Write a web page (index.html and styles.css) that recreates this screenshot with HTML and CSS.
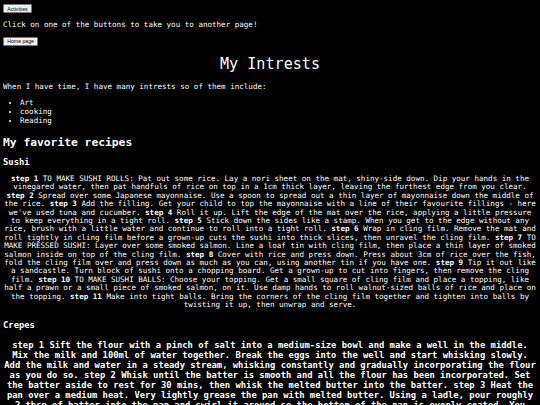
FILE: index.html
```html
<!DOCTYPE html>
<html>
<head>
<meta charset="utf-8">
<title>My Intrests</title>
<link rel="stylesheet" href="styles.css">
</head>
<body>
<div class="nav"><button class="btn">Activities</button></div>
<p class="intro">Click on one of the buttons to take you to another page!</p>
<div class="nav"><button class="btn">Home page</button></div>
<h1 class="title">My Intrests</h1>
<p class="text">When I have time, I have many intrests so of them include:</p>
<ul class="list">
<li>Art</li>
<li>cooking</li>
<li>Reading</li>
</ul>
<h2 class="section">My favorite recipes</h2>
<h3 class="recipe">Sushi</h3>
<p class="steps"><b>step 1</b> TO MAKE SUSHI ROLLS: Pat out some rice. Lay a nori sheet on the mat, shiny-side down. Dip your hands in the vinegared water, then pat handfuls of rice on top in a 1cm thick layer, leaving the furthest edge from you clear. <b>step 2</b> Spread over some Japanese mayonnaise. Use a spoon to spread out a thin layer of mayonnaise down the middle of the rice. <b>step 3</b> Add the filling. Get your child to top the mayonnaise with a line of their favourite fillings - here we've used tuna and cucumber. <b>step 4</b> Roll it up. Lift the edge of the mat over the rice, applying a little pressure to keep everything in a tight roll. <b>step 5</b> Stick down the sides like a stamp. When you get to the edge without any rice, brush with a little water and continue to roll into a tight roll. <b>step 6</b> Wrap in cling film. Remove the mat and roll tightly in cling film before a grown-up cuts the sushi into thick slices, then unravel the cling film. <b>step 7</b> TO MAKE PRESSED SUSHI: Layer over some smoked salmon. Line a loaf tin with cling film, then place a thin layer of smoked salmon inside on top of the cling film. <b>step 8</b> Cover with rice and press down. Press about 3cm of rice over the fish, fold the cling film over and press down as much as you can, using another tin if you have one. <b>step 9</b> Tip it out like a sandcastle. Turn block of sushi onto a chopping board. Get a grown-up to cut into fingers, then remove the cling film. <b>step 10</b> TO MAKE SUSHI BALLS: Choose your topping. Get a small square of cling film and place a topping, like half a prawn or a small piece of smoked salmon, on it. Use damp hands to roll walnut-sized balls of rice and place on the topping. <b>step 11</b> Make into tight balls. Bring the corners of the cling film together and tighten into balls by twisting it up, then unwrap and serve.</p>
<h3 class="recipe">Crepes</h3>
<h3 class="steps-big">step 1 Sift the flour with a pinch of salt into a medium-size bowl and make a well in the middle. Mix the milk and 100ml of water together. Break the eggs into the well and start whisking slowly. Add the milk and water in a steady stream, whisking constantly and gradually incorporating the flour as you do so. step 2 Whisk until the batter is smooth and all the flour has been incorporated. Set the batter aside to rest for 30 mins, then whisk the melted butter into the batter. step 3 Heat the pan over a medium heat. Very lightly grease the pan with melted butter. Using a ladle, pour roughly 2 tbsp of batter into the pan and swirl it around so the bottom of the pan is evenly coated. You want the crepe to be as thin as possible. step 4 Cook for about a minute until golden underneath, then flip it over and cook the other side.</h3>
</body>
</html>
```

FILE: styles.css
```css
html {
  background: #000;
}

body {
  margin: 3px;
  background: #000;
  color: #fff;
  font-family: "DejaVu Sans Mono", monospace;
  font-size: 7.55px;
  line-height: 8.4px;
}

.nav {
  display: flex;
  margin-top: 1px;
}

.btn {
  font-family: "Liberation Sans", Arial, sans-serif;
  font-size: 5.2px;
  line-height: 6px;
  height: 9px;
  padding: 0 3.2px;
  margin: 0;
  color: #000;
  background: #efefef;
  border: 1px solid #767676;
  border-radius: 1px;
}

.intro {
  margin: 7.55px 0;
}

.title {
  font-size: 15.1px;
  line-height: 17px;
  text-align: center;
  font-weight: normal;
  margin: 10px 0;
}

.text {
  margin: 7.55px 0 8.5px;
}

.list {
  margin: 8.5px 0 7.55px;
  padding-left: 17px;
  line-height: 8.9px;
}

.section {
  font-size: 11.3px;
  line-height: 12.7px;
  font-weight: bold;
  margin: 11px 0 8.4px;
}

.recipe {
  font-size: 8.83px;
  line-height: 9.9px;
  font-weight: bold;
  margin: 8px 0 6.8px;
}

.steps {
  text-align: center;
  margin: 6.8px 0 11.8px;
}

.steps-big {
  font-size: 8.83px;
  line-height: 10px;
  font-weight: bold;
  text-align: center;
  margin: 8.8px 0;
}
```
